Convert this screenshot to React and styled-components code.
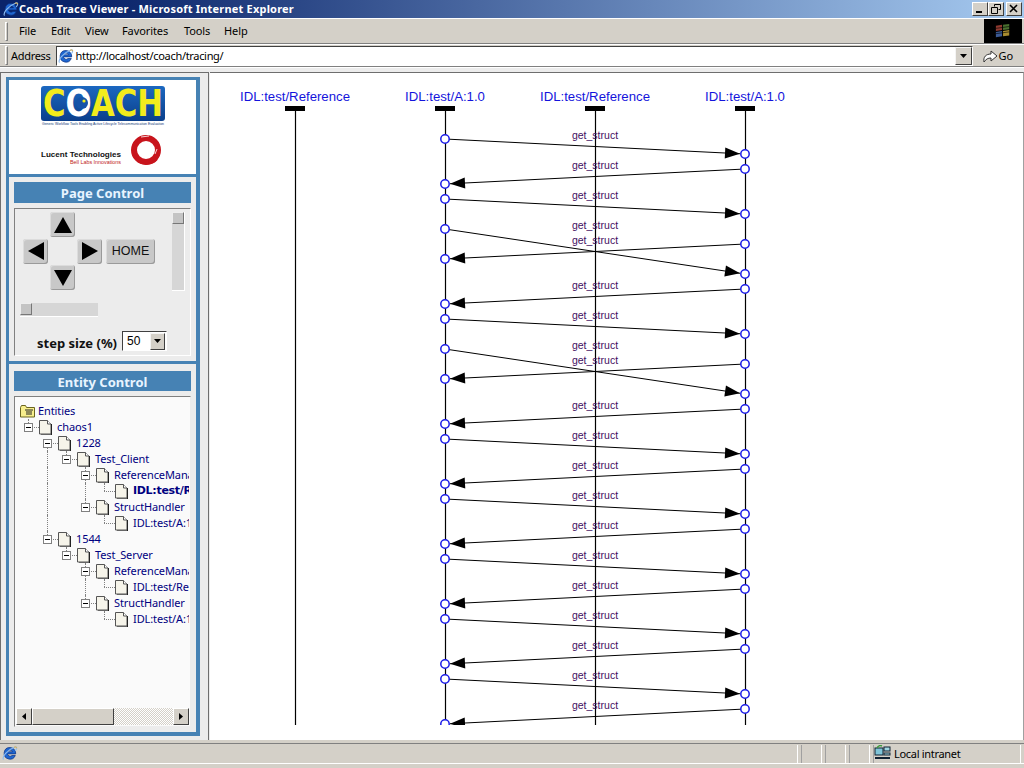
import React from "react";
import styled, { createGlobalStyle } from "styled-components";

const GlobalStyle = createGlobalStyle`
  html, body { margin: 0; padding: 0; overflow: hidden; background: #d4d0c8; }
  * { box-sizing: border-box; }
`;

const UI_FONT = `"Noto Sans", "Liberation Sans", sans-serif`;
const WIDE_FONT = `"DejaVu Sans", "Liberation Sans", sans-serif`;

const Window = styled.div`
  width: 1024px;
  height: 768px;
  display: flex;
  flex-direction: column;
  background: #d4d0c8;
  font-family: ${UI_FONT};
  font-size: 11px;
  color: #000;
  overflow: hidden;
`;

const TitleBar = styled.div`
  height: 18px;
  flex: none;
  display: flex;
  align-items: center;
  padding: 0 2px 0 3px;
  background: linear-gradient(90deg, #0a246a 0%, #0a246a 10%, #a6caf0 100%);
`;

const TitleText = styled.span`
  font: bold 11px/18px ${UI_FONT};
  letter-spacing: 0.2px;
  color: #fff;
  flex: 1;
`;

const CaptionButton = styled.button`
  width: 16px;
  height: 14px;
  padding: 0;
  margin-left: ${(p) => p.$gap || 0}px;
  border: 1px solid;
  border-color: #fff #404040 #404040 #fff;
  background: #d4d0c8;
  display: flex;
  align-items: center;
  justify-content: center;
`;

const MenuBar = styled.div`
  height: 26px;
  flex: none;
  display: flex;
  align-items: center;
  border-top: 1px solid #fff;
  border-bottom: 1px solid #808080;
  padding-left: 5px;
`;

const Grip = styled.div`
  width: 3px;
  height: 19px;
  border: 1px solid;
  border-color: #fff #808080 #808080 #fff;
  margin-right: ${(p) => p.$space}px;
`;

const MenuItem = styled.span`
  width: ${(p) => p.$width}px;
  line-height: 16px;
  letter-spacing: -0.1px;
`;

const BrandBox = styled.div`
  margin-left: auto;
  margin-right: 2px;
  width: 38px;
  height: 24px;
  background: #000;
  display: flex;
  align-items: center;
  justify-content: center;
`;

const AddressBar = styled.div`
  height: 23px;
  flex: none;
  display: flex;
  align-items: center;
  border-top: 1px solid #fff;
  border-bottom: 1px solid #808080;
  padding-left: 5px;
`;

const AddressLabel = styled.span`
  letter-spacing: -0.3px;
`;

const AddressField = styled.div`
  width: 917px;
  height: 20px;
  margin-left: 5px;
  display: flex;
  align-items: center;
  background: #fff;
  border: 1px solid;
  border-color: #404040 #fff #fff #404040;
  padding-left: 1px;
`;

const AddressText = styled.span`
  flex: 1;
  margin-left: 2px;
  font-size: 11px;
  letter-spacing: -0.32px;
`;

const DropButton = styled.div`
  width: 17px;
  height: 18px;
  background: #d4d0c8;
  border: 1px solid;
  border-color: #f4f4f4 #404040 #404040 #f4f4f4;
  display: flex;
  align-items: center;
  justify-content: center;
`;

const GoButton = styled.div`
  display: flex;
  align-items: center;
  gap: 1px;
  margin-left: 10px;
  font-size: 11px;
`;

const Main = styled.div`
  flex: 1;
  min-height: 0;
  display: flex;
  padding-top: 4px;
  border-top: 1px solid #fff;
  background: #ececec;
`;

const Sidebar = styled.aside`
  width: 209px;
  flex: none;
  display: flex;
  padding: 4px 8px 4px 5px;
  border-top: 1px solid #6e6e6e;
  border-left: 1px solid #6e6e6e;
  border-right: 1px solid #6e6e6e;
`;

const Frame = styled.div`
  flex: 1;
  min-width: 0;
  display: flex;
  flex-direction: column;
  gap: 3px;
  background: #4682b4;
  border: solid #4682b4;
  border-width: 3px 4px 4px 3px;
`;

const LogoBox = styled.div`
  height: 94px;
  flex: none;
  background: #fff;
  display: flex;
  flex-direction: column;
  gap: 8px;
  justify-content: center;
  align-items: center;
`;

const Section = styled.section`
  flex: ${(p) => (p.$grow ? 1 : "none")};
  min-height: 0;
  min-width: 0;
  display: flex;
  flex-direction: column;
  gap: 5px;
  padding: ${(p) => (p.$grow ? "7px 5px 5px" : "5px")};
  background: #ececec;
`;

const SectionTitle = styled.h2`
  margin: 0;
  height: ${(p) => (p.$short ? 20 : 21)}px;
  flex: none;
  background: #4682b4;
  color: #e8f4ff;
  font: bold 13px/${(p) => (p.$short ? 22 : 23)}px ${UI_FONT};
  text-align: center;
`;

const ControlBox = styled.div`
  height: 148px;
  padding: 3px 5px 0;
  border: 1px solid;
  border-color: #808080 #fff #fff #808080;
`;

const ControlTop = styled.div`
  display: flex;
  justify-content: space-between;
`;

const Pad = styled.div`
  margin-left: 3px;
  display: grid;
  grid-template-columns: 25px 25px 25px 51px;
  grid-template-rows: 25px 25px 25px;
  column-gap: 2px;
  row-gap: 1.5px;
`;

const PadButton = styled.button`
  grid-column: ${(p) => p.$col};
  grid-row: ${(p) => p.$row};
  margin: 0;
  margin-left: ${(p) => (p.$wide ? 2 : 0)}px;
  padding: 0;
  border: none;
  border-radius: 3px;
  background: #c8c8c8;
  box-shadow: inset -1px -1px 0 #9a9a9a, inset 1px 1px 0 #dcdcdc;
  font: 12.5px/25px "Liberation Sans", sans-serif;
  color: #111;
  display: flex;
  align-items: center;
  justify-content: center;
`;

const VSlider = styled.div`
  width: 13px;
  height: 79px;
  background: #d6d6d6;
  border-right: 1px solid #fff;
  border-bottom: 1px solid #fff;
`;

const HSlider = styled.div`
  width: 78px;
  height: 14px;
  margin-top: 12px;
  background: #d6d6d6;
  border-bottom: 1px solid #fff;
`;

const Thumb = styled.div`
  width: 12px;
  height: 12px;
  background: #c4c4c4;
  border: 1px solid;
  border-color: #eee #777 #777 #eee;
`;

const StepRow = styled.div`
  margin: 14px 0 0 17px;
  display: flex;
  align-items: flex-start;
  gap: 5px;
`;

const StepLabel = styled.label`
  margin-top: 2px;
  font: bold 13px/20px ${UI_FONT};
  color: #111;
  white-space: nowrap;
`;

const StepSelect = styled.div`
  width: 45px;
  height: 20px;
  background: #fff;
  border: 1px solid;
  border-color: #404040 #fff #fff #404040;
  display: flex;
  align-items: center;
  justify-content: space-between;
  padding-left: 4px;
  font: 12px "Liberation Sans", sans-serif;
`;

const SelectButton = styled(DropButton)`
  width: 15px;
  height: 17px;
  margin-right: 1px;
`;

const TreeBox = styled.div`
  flex: 1;
  min-height: 0;
  display: flex;
  flex-direction: column;
  background: #fafafa;
  border: 1px solid;
  border-color: #808080 #ececec #ececec #808080;
`;

const TreeRows = styled.div`
  flex: 1;
  min-height: 0;
  overflow: hidden;
  padding: 6px 0 0 4px;
  margin-right: 1px;
`;

const TreeRow = styled.div`
  height: 16px;
  display: flex;
  align-items: stretch;
  white-space: nowrap;
`;

const IconSlot = styled.span`
  display: flex;
  flex: none;
  align-items: center;
  margin-left: 1px;
`;

const Guide = styled.span`
  width: 19px;
  flex: none;
  position: relative;
  &::before {
    content: "";
    position: absolute;
    left: 9px;
    top: ${(p) => (p.$from === "mid" ? "8px" : "0")};
    bottom: ${(p) => (p.$to === "mid" ? "8px" : "0")};
    border-left: 1px dotted #808080;
    display: ${(p) => (p.$line ? "block" : "none")};
  }
  &::after {
    content: "";
    position: absolute;
    left: 9px;
    right: -1px;
    top: 8px;
    border-top: 1px dotted #808080;
    display: ${(p) => (p.$stub ? "block" : "none")};
  }
`;

const Expander = styled.span`
  position: absolute;
  left: 5px;
  top: 4px;
  width: 9px;
  height: 9px;
  border: 1px solid #808080;
  background: #fff;
  z-index: 1;
  &::after {
    content: "";
    position: absolute;
    left: 1px;
    right: 1px;
    top: 3px;
    height: 1px;
    background: #000;
  }
`;

const TreeLabel = styled.span`
  margin-left: ${(p) => p.$gap}px;
  font-family: ${(p) => (p.$bold ? WIDE_FONT : UI_FONT)};
  font-weight: ${(p) => (p.$bold ? 700 : 400)};
  font-size: 11px;
  line-height: 16px;
  letter-spacing: ${(p) => (p.$bold ? -0.3 : -0.1)}px;
  color: #000080;
`;

const HScroll = styled.div`
  height: 17px;
  flex: none;
  margin: 0 1px 1px;
  display: flex;
  background: repeating-conic-gradient(#d4d0c8 0 25%, #fff 0 50%) 0 0 / 2px 2px;
`;

const ScrollButton = styled.div`
  width: 16px;
  flex: none;
  margin-left: ${(p) => (p.$end ? "auto" : 0)};
  background: #d4d0c8;
  border: 1px solid;
  border-color: #fff #404040 #404040 #fff;
  display: flex;
  align-items: center;
  justify-content: center;
`;

const ScrollThumb = styled.div`
  width: 82px;
  background: #d4d0c8;
  border: 1px solid;
  border-color: #fff #404040 #404040 #fff;
`;

const ChartPane = styled.main`
  flex: 1;
  margin-left: 1px;
  background: #fff;
  border-top: 1px solid #6e6e6e;
  border-right: 1px solid #a0a0a0;
  overflow: hidden;
`;

const Chart = styled.svg`
  display: block;
`;

const StatusBar = styled.footer`
  height: 21px;
  flex: none;
  display: flex;
  align-items: center;
  margin: 3px 0 4px;
  border-top: 1px solid #808080;
  border-bottom: 1px solid #fff;
  padding-left: 2px;
  letter-spacing: -0.3px;
`;

const StatusCell = styled.div`
  width: ${(p) => p.$width}px;
  height: 18px;
  flex: ${(p) => (p.$grow ? 1 : "none")};
  display: flex;
  align-items: center;
  gap: 2px;
  margin-right: 3px;
  padding-bottom: 1px;
  border-left: 1px solid #a0a0a0;
  border-right: 1px solid #fff;
  &:first-child { border-left: none; }
`;

const IeIcon = ({ size = 16 }) => (
  <svg width={size} height={size} viewBox="0 0 16 16">
    <path d="M8 2.5a5.8 5.8 0 1 0 5.3 8H10a2.8 2.8 0 0 1-4.6-1.6h8.3A5.8 5.8 0 0 0 8 2.5zM5.5 6.8a2.7 2.7 0 0 1 5 0z" fill="#1f66d0" stroke="#0a2f80" strokeWidth=".7" />
    <path d="M1.6 14.5c-2-2 3-9.5 11.4-12.5 2.2-.7 2 2 .2 4" fill="none" stroke="#8cbcf2" strokeWidth="1.1" />
    <path d="M12 2.3c1.6-.8 2.9-.4 2.7 1" fill="none" stroke="#e8b23a" strokeWidth="1" />
  </svg>
);

const WinFlag = () => (
  <svg width="18" height="16" viewBox="0 0 20 18">
    <path d="M2 3l7-1v6l-7 1z" fill="#8f3a30" />
    <path d="M10 2l7-1v6l-7 1z" fill="#4a7030" />
    <path d="M2 10l7-1v6l-7 1z" fill="#3c5a94" />
    <path d="M10 9l7-1v6l-7 1z" fill="#a88c30" />
    <path d="M9.5 1v15M2 6l15-2M2 12l15-2" stroke="#000" strokeWidth=".7" />
  </svg>
);

const Triangle = ({ dir, w = 18, h = 16 }) => {
  const pts = {
    up: `${w / 2},0 ${w},${h} 0,${h}`,
    down: `0,0 ${w},0 ${w / 2},${h}`,
    left: `${w},0 ${w},${h} 0,${h / 2}`,
    right: `0,0 ${w},${h / 2} 0,${h}`,
  };
  return (
    <svg width={w} height={h} viewBox={`0 0 ${w} ${h}`}>
      <polygon points={pts[dir]} fill="#000" />
    </svg>
  );
};

const DocIcon = () => (
  <svg width="13" height="16" viewBox="0 0 13 16">
    <path d="M.5 1.5h8l3.5 3.5v10H.5z" fill="#f6f4ea" stroke="#555" />
    <path d="M8.5 1.5V5H12" fill="#fff" stroke="#555" />
    <path d="M12.5 5v11H2" fill="none" stroke="#222" />
  </svg>
);

const FolderIcon = () => (
  <svg width="16" height="14" viewBox="0 0 16 14">
    <path d="M.5 3.5l1-2h4l1 2h8v9.5H.5z" fill="#f7ee8c" stroke="#6a6420" />
    <path d="M5 6h8M6 8h6M6 10h6" stroke="#222" />
  </svg>
);

const CoachLogo = () => (
  <svg width="124" height="40" viewBox="0 0 124 40" style={{ display: "block" }}>
    <defs>
      <linearGradient id="coach-bg" x1="0" y1="0" x2="0" y2="1">
        <stop offset="0" stopColor="#1c68c0" />
        <stop offset="1" stopColor="#0b3f8c" />
      </linearGradient>
    </defs>
    <rect width="124" height="35" rx="3" fill="url(#coach-bg)" />
    <text x="2" y="30" fontFamily="DejaVu Sans, sans-serif" fontWeight="700" fontSize="37" textLength="120" lengthAdjust="spacingAndGlyphs" fill="#f2ec1c">
      C<tspan fill="#fff">O</tspan>ACH
    </text>
    <circle cx="41" cy="17" r="6" fill="#1553a8" />
    <circle cx="43" cy="15" r="1.6" fill="#f2ec1c" />
    <text x="1" y="39" fontFamily="Liberation Sans, sans-serif" fontSize="4" textLength="122" lengthAdjust="spacingAndGlyphs" fill="#123a78">
      Generic Workflow Tools Enabling Active Lifecycle Telecommunication Evaluation
    </text>
  </svg>
);

const LucentLogo = () => (
  <svg width="124" height="34" viewBox="0 0 124 34" style={{ display: "block" }}>
    <text x="0" y="23" fontFamily="Liberation Sans, sans-serif" fontWeight="700" fontSize="8" textLength="80" lengthAdjust="spacingAndGlyphs" fill="#111">
      Lucent Technologies
    </text>
    <text x="29" y="30" fontFamily="Liberation Sans, sans-serif" fontSize="6" textLength="51" lengthAdjust="spacingAndGlyphs" fill="#c01818">
      Bell Labs Innovations
    </text>
    <circle cx="105" cy="16" r="12" fill="none" stroke="#c8141c" strokeWidth="6" />
    <path d="M93 11c4-8 17-11 24-2M97 27c5 4 14 4 19-2" fill="none" stroke="#c8141c" strokeWidth="2" />
    <path d="M100 3l8-1M114 20l2-5" stroke="#fff" strokeWidth=".8" />
  </svg>
);

const treeData = [
  { label: "chaos1", depth: 0, guides: [], stubUp: true },
  { label: "1228", depth: 1, guides: [], lineDown: true },
  { label: "Test_Client", depth: 2, guides: [1], stubUp: true },
  { label: "ReferenceManager", depth: 3, guides: [1], stubUp: true, lineDown: true },
  { label: "IDL:test/Reference:1.0", depth: 4, guides: [1, 3], leaf: true, bold: true },
  { label: "StructHandler", depth: 3, guides: [1], stubUp: true },
  { label: "IDL:test/A:1.0", depth: 4, guides: [1], leaf: true },
  { label: "1544", depth: 1, guides: [], stubUp: true },
  { label: "Test_Server", depth: 2, guides: [], stubUp: true },
  { label: "ReferenceManager", depth: 3, guides: [], stubUp: true, lineDown: true },
  { label: "IDL:test/Reference:1.0", depth: 4, guides: [3], leaf: true },
  { label: "StructHandler", depth: 3, guides: [], stubUp: true },
  { label: "IDL:test/A:1.0", depth: 4, guides: [], leaf: true },
];

function Tree() {
  return (
    <TreeRows>
      <TreeRow>
        <IconSlot>
          <FolderIcon />
        </IconSlot>
        <TreeLabel $gap={2}>Entities</TreeLabel>
      </TreeRow>
      {treeData.map((row, i) => {
        const cols = [];
        for (let c = 0; c < row.depth; c++) {
          cols.push(<Guide key={c} $line={row.guides.includes(c)} />);
        }
        return (
          <TreeRow key={i}>
            {cols}
            {row.leaf ? (
              <Guide $line $stub $to="mid" />
            ) : (
              <Guide
                $line
                $stub
                $from={row.lineDown && !row.stubUp ? "mid" : undefined}
                $to={row.lineDown ? undefined : "mid"}
              >
                <Expander />
              </Guide>
            )}
            <IconSlot>
              <DocIcon />
            </IconSlot>
            <TreeLabel $gap={5} $bold={row.bold}>
              {row.label}
            </TreeLabel>
          </TreeRow>
        );
      })}
    </TreeRows>
  );
}

const LEFT = 445;
const RIGHT = 745;
const MIDDLE = 595;
const FIRST = 295;
const CHART_BOTTOM = 725;

const heads = [
  { x: FIRST, label: "IDL:test/Reference" },
  { x: LEFT, label: "IDL:test/A:1.0" },
  { x: MIDDLE, label: "IDL:test/Reference" },
  { x: RIGHT, label: "IDL:test/A:1.0" },
];

// [start y, end y, true when it runs left to right]
const messages = [
  [139, 154, true], [169, 184, false], [199, 214, true], [229, 274, true],
  [244, 259, false], [289, 304, false], [319, 334, true], [349, 394, true],
  [364, 379, false], [409, 424, false], [439, 454, true], [469, 484, false],
  [499, 514, true], [529, 544, false], [559, 574, true], [589, 604, false],
  [619, 634, true], [649, 664, false], [679, 694, true], [709, 724, false],
];

function Message({ y1, y2, forward }) {
  const fromX = forward ? LEFT : RIGHT;
  const toX = forward ? RIGHT : LEFT;
  const dir = forward ? 1 : -1;
  const tipX = toX - dir * 5;
  const tipY = y2 - ((y2 - y1) / 300) * 5;
  const len = 15;
  const ux = dir * Math.cos(Math.atan2(y2 - y1, 300));
  const uy = Math.sin(Math.atan2(y2 - y1, 300));
  const baseX = tipX - ux * len;
  const baseY = tipY - uy * len;
  const head = `${tipX},${tipY} ${baseX - uy * 5.5},${baseY + ux * 5.5} ${baseX + uy * 5.5},${baseY - ux * 5.5}`;
  return (
    <g>
      <line x1={fromX} y1={y1} x2={tipX} y2={tipY} stroke="#000" strokeWidth="1" />
      <polygon points={head} fill="#000" />
      <circle cx={fromX} cy={y1} r="4.2" fill="#fff" stroke="#1a1ae6" strokeWidth="1.5" />
      <circle cx={toX} cy={y2} r="4.2" fill="#fff" stroke="#1a1ae6" strokeWidth="1.5" />
    </g>
  );
}

function SequenceChart() {
  return (
    <Chart width="812" height="667" viewBox="210 73 812 667">
      <defs>
        <clipPath id="chart-clip">
          <rect x="210" y="73" width="812" height={CHART_BOTTOM - 73} />
        </clipPath>
      </defs>
      <g clipPath="url(#chart-clip)">
        {heads.map((h, i) => (
          <g key={i}>
            <text x={h.x} y="101" textAnchor="middle" fontFamily="Liberation Sans, sans-serif" fontSize="13.2" fill="#1414dc">
              {h.label}
            </text>
            <rect x={h.x - 10} y="106" width="20" height="5" fill="#000" />
            <line x1={h.x + 0.5} y1="110" x2={h.x + 0.5} y2={CHART_BOTTOM} stroke="#000" strokeWidth="1.2" />
          </g>
        ))}
        {messages.map(([y1, y2, forward], i) => (
          <Message key={i} y1={y1} y2={y2} forward={forward} />
        ))}
        {messages.map(([y1], i) => (
          <text key={i} x={MIDDLE} y={y1 - 0.5} textAnchor="middle" fontFamily="Liberation Sans, sans-serif" fontSize="10.5" fill="#3f0f5f">
            get_struct
          </text>
        ))}
      </g>
    </Chart>
  );
}

export default function App() {
  return (
    <Window>
      <GlobalStyle />
      <TitleBar>
        <IeIcon />
        <TitleText>Coach Trace Viewer - Microsoft Internet Explorer</TitleText>
        <CaptionButton>
          <svg width="10" height="10"><rect x="1" y="7" width="6" height="2" fill="#000" /></svg>
        </CaptionButton>
        <CaptionButton>
          <svg width="10" height="10"><path d="M3.5 2.5V.5h6v5H7.5M.5 3.5h6v6h-6z" fill="none" stroke="#000" /></svg>
        </CaptionButton>
        <CaptionButton $gap={2}>
          <svg width="10" height="10"><path d="M1 1l7 7M8 1L1 8" stroke="#000" strokeWidth="1.6" /></svg>
        </CaptionButton>
      </TitleBar>

      <MenuBar>
        <Grip $space={11} />
        <MenuItem $width={32}>File</MenuItem>
        <MenuItem $width={34}>Edit</MenuItem>
        <MenuItem $width={37}>View</MenuItem>
        <MenuItem $width={62}>Favorites</MenuItem>
        <MenuItem $width={40}>Tools</MenuItem>
        <MenuItem $width={30}>Help</MenuItem>
        <BrandBox>
          <WinFlag />
        </BrandBox>
      </MenuBar>

      <AddressBar>
        <Grip $space={3} />
        <AddressLabel>Address</AddressLabel>
        <AddressField>
          <IeIcon />
          <AddressText>http://localhost/coach/tracing/</AddressText>
          <DropButton>
            <Triangle dir="down" w={7} h={4} />
          </DropButton>
        </AddressField>
        <GoButton>
          <svg width="15" height="16" viewBox="0 0 15 16">
            <path d="M1 14c-1-5 2-8 7-8V3l6 5-6 5v-3c-3 0-5 1-7 4z" fill="#fff" stroke="#333" />
          </svg>
          Go
        </GoButton>
      </AddressBar>

      <Main>
        <Sidebar>
          <Frame>
            <LogoBox>
              <CoachLogo />
              <LucentLogo />
            </LogoBox>
            <Section>
              <SectionTitle>Page Control</SectionTitle>
              <ControlBox>
                <ControlTop>
                  <Pad>
                    <PadButton $col={2} $row={1}><Triangle dir="up" /></PadButton>
                    <PadButton $col={1} $row={2}><Triangle dir="left" w={16} h={18} /></PadButton>
                    <PadButton $col={3} $row={2}><Triangle dir="right" w={16} h={18} /></PadButton>
                    <PadButton $col={4} $row={2} $wide>HOME</PadButton>
                    <PadButton $col={2} $row={3}><Triangle dir="down" /></PadButton>
                  </Pad>
                  <VSlider>
                    <Thumb />
                  </VSlider>
                </ControlTop>
                <HSlider>
                  <Thumb />
                </HSlider>
                <StepRow>
                  <StepLabel>step size (%)</StepLabel>
                  <StepSelect>
                    50
                    <SelectButton>
                      <Triangle dir="down" w={7} h={4} />
                    </SelectButton>
                  </StepSelect>
                </StepRow>
              </ControlBox>
            </Section>
            <Section $grow>
              <SectionTitle $short>Entity Control</SectionTitle>
              <TreeBox>
                <Tree />
                <HScroll>
                  <ScrollButton><Triangle dir="left" w={4} h={7} /></ScrollButton>
                  <ScrollThumb />
                  <ScrollButton $end><Triangle dir="right" w={4} h={7} /></ScrollButton>
                </HScroll>
              </TreeBox>
            </Section>
          </Frame>
        </Sidebar>
        <ChartPane>
          <SequenceChart />
        </ChartPane>
      </Main>

      <StatusBar>
        <StatusCell $width={796}>
          <IeIcon />
        </StatusCell>
        <StatusCell $width={21} />
        <StatusCell $width={21} />
        <StatusCell $width={21} />
        <StatusCell $grow>
          <svg width="18" height="16" viewBox="0 0 18 16">
            <rect x="1" y="3" width="8" height="7" fill="#7fc4d8" stroke="#123" />
            <rect x="10" y="2" width="6" height="4" fill="#9fd4e0" stroke="#123" />
            <rect x="10" y="8" width="6" height="2" fill="#9fd4e0" stroke="#123" />
            <path d="M1 13h15" stroke="#123" strokeWidth="2" />
            <path d="M3 3c1-2 3-3 5-2" fill="none" stroke="#3c9a3c" strokeWidth="1.5" />
          </svg>
          Local intranet
        </StatusCell>
      </StatusBar>
    </Window>
  );
}
